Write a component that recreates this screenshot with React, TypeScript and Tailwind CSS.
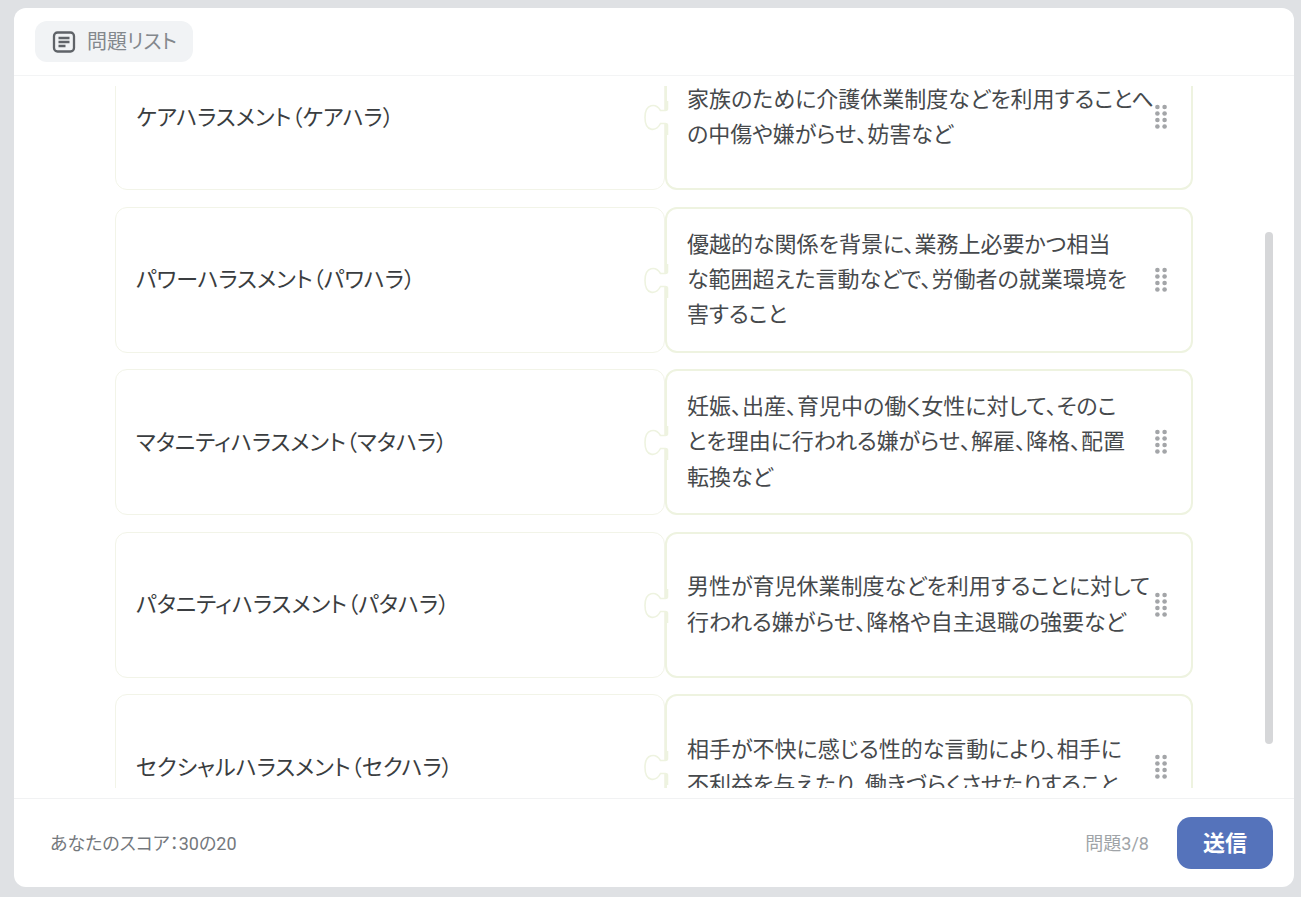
const rows: { term: string; lines: string[] }[] = [
  { term: "ケアハラスメント（ケアハラ）", lines: ["家族のために介護休業制度などを利用することへ", "の中傷や嫌がらせ、妨害など"] },
  { term: "パワーハラスメント（パワハラ）", lines: ["優越的な関係を背景に、業務上必要かつ相当", "な範囲超えた言動などで、労働者の就業環境を", "害すること"] },
  { term: "マタニティハラスメント（マタハラ）", lines: ["妊娠、出産、育児中の働く女性に対して、そのこ", "とを理由に行われる嫌がらせ、解雇、降格、配置", "転換など"] },
  { term: "パタニティハラスメント（パタハラ）", lines: ["男性が育児休業制度などを利用することに対して", "行われる嫌がらせ、降格や自主退職の強要など"] },
  { term: "セクシャルハラスメント（セクハラ）", lines: ["相手が不快に感じる性的な言動により、相手に", "不利益を与えたり、働きづらくさせたりすること"] },
];

function Grip() {
  return (
    <svg width="12" height="26" viewBox="0 0 12 26" className="shrink-0" fill="#a3a5a8">
      {[3, 9.5, 16, 22.5].map((y) => (
        <g key={y}>
          <circle cx="2.4" cy={y} r="2.3" />
          <circle cx="9.6" cy={y} r="2.3" />
        </g>
      ))}
    </svg>
  );
}

function Knob() {
  return (
    <svg width="26" height="34" viewBox="0 0 26 34" fill="#ffffff" stroke="#eef3e0" strokeWidth="1.6" className="absolute left-[-24px] top-[55px]">
      <path d="M24.5 0 V7.5 Q24.5 9.5 22.5 9.5 H17.5 C13 2 2 2 2 16.5 C2 31 13 31 17.5 22.5 H22.5 Q24.5 22.5 24.5 24.5 V34" />
      <rect x="23" y="10.4" width="3" height="11.2" fill="#ffffff" stroke="none" />
    </svg>
  );
}

function Row({ term, lines }: { term: string; lines: string[] }) {
  return (
    <div className="flex h-[146px] shrink-0">
      <div className="flex w-[550px] items-center rounded-xl border border-[#f2f4e8] pl-5 text-[22px] text-[#3a3d40]">
        {term}
      </div>
      <div className="relative flex w-[528px] items-center justify-between rounded-xl border-2 border-[#eef3e0] bg-white pl-5 pr-[24px]">
        <Knob />
        <p className="whitespace-nowrap text-[22px] leading-[35.3px] text-[#46494c]">
          {lines.map((l) => (
            <span key={l} className="block">{l}</span>
          ))}
        </p>
        <Grip />
      </div>
    </div>
  );
}

export default function App() {
  return (
    <div className="h-[897px] overflow-hidden bg-[#dfe1e4] pl-[14px] pr-[7px] pt-2 [font-family:Roboto,'Noto_Sans_CJK_JP',sans-serif] [font-feature-settings:'palt']">
      <div className="relative flex h-[879px] w-[1280px] flex-col overflow-hidden rounded-xl bg-white">
        <header className="flex h-[68px] shrink-0 items-start border-b border-[#f3f4f5] pl-[21px] pt-[13px]">
          <div className="flex h-[41px] w-[158px] items-center gap-[11px] rounded-xl bg-[#f1f3f5] pl-[17px]">
            <svg width="24" height="24" viewBox="0 0 24 24" fill="none" stroke="#5f6368" strokeWidth="2.3" strokeLinecap="butt">
              <rect x="2" y="2.5" width="20" height="19" rx="3.5" />
              <path d="M6.5 8h11M6.5 12h11M6.5 16h7" />
            </svg>
            <span className="text-[20px] text-[#83888d]">問題リスト</span>
          </div>
        </header>
        <main className="flex-1 overflow-hidden py-[10px]">
          <div className="h-full overflow-hidden pl-[101px]">
            <div className="mt-[-42px] flex flex-col gap-[16.5px]">
              {rows.map((r) => (
                <Row key={r.term} {...r} />
              ))}
            </div>
          </div>
        </main>
        <div className="absolute left-[1251px] top-[224px] h-[512px] w-2 rounded bg-[#d6d7d9]" />
        <footer className="flex h-[89px] shrink-0 items-center justify-between border-t border-[#f1f2f3] pl-9 pr-[21px]">
          <span className="text-[18px] text-[#74787d]">あなたのスコア：30の20</span>
          <div className="flex items-center gap-[28px]">
            <span className="text-[18px] text-[#a0a4a8]">問題3/8</span>
            <button className="h-[52px] w-[96px] rounded-[14px] bg-[#5573bb] text-[22px] font-bold text-white">送信</button>
          </div>
        </footer>
      </div>
    </div>
  );
}
